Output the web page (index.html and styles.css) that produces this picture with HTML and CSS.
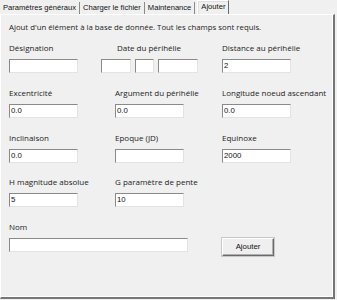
FILE: index.html
```html
<!DOCTYPE html>
<html lang="fr">
<head>
<meta charset="utf-8">
<link rel="stylesheet" href="styles.css">
</head>
<body>
<div class="window">
  <div class="tabs">
    <div class="tab">Paramètres généraux</div>
    <div class="tab">Charger le fichier</div>
    <div class="tab">Maintenance</div>
    <div class="tab active">Ajouter</div>
  </div>
  <div class="panel">
    <p class="intro">Ajout d'un élément à la base de donnée. Tout les champs sont requis.</p>
    <div class="grid">
      <div class="field">
        <label>Désignation</label>
        <div class="input w68"></div>
      </div>
      <div class="field date">
        <label>Date du périhélie</label>
        <div class="dates">
          <div class="input d1"></div>
          <div class="input d2"></div>
          <div class="input d3"></div>
        </div>
      </div>
      <div class="field">
        <label>Distance au périhélie</label>
        <div class="input w68">2</div>
      </div>

      <div class="field">
        <label>Excentricité</label>
        <div class="input w68">0.0</div>
      </div>
      <div class="field">
        <label>Argument du périhélie</label>
        <div class="input w68">0.0</div>
      </div>
      <div class="field">
        <label>Longitude noeud ascendant</label>
        <div class="input w68">0.0</div>
      </div>

      <div class="field">
        <label>Inclinaison</label>
        <div class="input w68">0.0</div>
      </div>
      <div class="field">
        <label>Epoque (JD)</label>
        <div class="input w68"></div>
      </div>
      <div class="field">
        <label>Equinoxe</label>
        <div class="input w68">2000</div>
      </div>

      <div class="field">
        <label>H magnitude absolue</label>
        <div class="input w68">5</div>
      </div>
      <div class="field">
        <label>G paramètre de pente</label>
        <div class="input w68">10</div>
      </div>
      <div class="field"></div>

      <div class="field span2">
        <label>Nom</label>
        <div class="input wide"></div>
      </div>
      <div class="field btncell">
        <div class="button">Ajouter</div>
      </div>
    </div>
  </div>
</div>
</body>
</html>
```

FILE: styles.css
```css
html, body {
  margin: 0;
  padding: 0;
  background: #f0f0f0;
}
.window {
  width: 337px;
  height: 300px;
  background: #f0f0f0;
  font-family: "Liberation Sans", Arial, sans-serif;
  color: #1a1a1a;
  box-sizing: border-box;
}
.tabs {
  display: flex;
  height: 14px;
  padding-left: 1px;
  align-items: flex-end;
}
.tab {
  font-size: 7.6px;
  line-height: 12px;
  padding: 0 3px 0 2px;
  border-right: 1px solid #8a8a8a;
  margin-right: 1px;
  height: 12px;
  color: #111;
}
.tab.active {
  border: 1px solid #adadad;
  border-top-color: #ffffff;
  border-left-color: #ffffff;
  border-right-color: #6b6b6b;
  border-bottom: none;
  height: 13px;
  padding: 0 3px;
  margin-left: 1px;
  background: #f0f0f0;
  box-shadow: inset 1px 1px 0 #e0e0e0;
}
.panel {
  height: 285px;
  width: 335px;
  box-sizing: border-box;
  border-top: 1px solid #ffffff;
  border-left: 1px solid #ffffff;
  border-right: 2px solid #777;
  border-bottom: 2px solid #777;
  box-shadow: inset -1px -1px 0 #ffffff;
  padding: 6px 0 0 8px;
}
.intro {
  margin: 0;
  font-family: "Open Sans", "DejaVu Sans", sans-serif;
  font-size: 7.8px;
  line-height: 12px;
  color: #222;
}
.grid {
  margin-top: 10px;
  display: grid;
  grid-template-columns: 106px 107px 1fr;
  grid-auto-rows: 44.75px;
}
.field {
  display: flex;
  flex-direction: column;
  align-items: flex-start;
}
.field label {
  font-family: "Open Sans", "DejaVu Sans", sans-serif;
  font-size: 8px;
  line-height: 10px;
  height: 16px;
  color: #222;
  white-space: nowrap;
}
.input {
  height: 14px;
  box-sizing: border-box;
  background: #fff;
  border-top: 1px solid #8a8a8a;
  border-left: 1px solid #8a8a8a;
  border-right: 1px solid #e3e3e3;
  border-bottom: 1px solid #e3e3e3;
  font-size: 7.8px;
  line-height: 12px;
  padding-left: 1px;
  color: #111;
}
.w68 { width: 69px; }
.field.date {
  align-items: center;
  margin-left: -15px;
  width: 98px;
}
.dates {
  display: flex;
  gap: 4px;
}
.d1 { width: 30px; }
.d2 { width: 19px; }
.d3 { width: 40px; }
.span2 { grid-column: span 2; }
.wide { width: 179px; }
.btncell { padding-top: 16px; }
.button {
  width: 52px;
  height: 18px;
  box-sizing: border-box;
  border: 1px solid #ffffff;
  border-right-color: #6a6a6a;
  border-bottom-color: #6a6a6a;
  box-shadow: inset -1px -1px 0 #b0b0b0;
  outline: 1px solid #c8c8c8;
  background: #efefef;
  font-size: 7.8px;
  line-height: 16px;
  text-align: center;
  color: #111;
}
```
